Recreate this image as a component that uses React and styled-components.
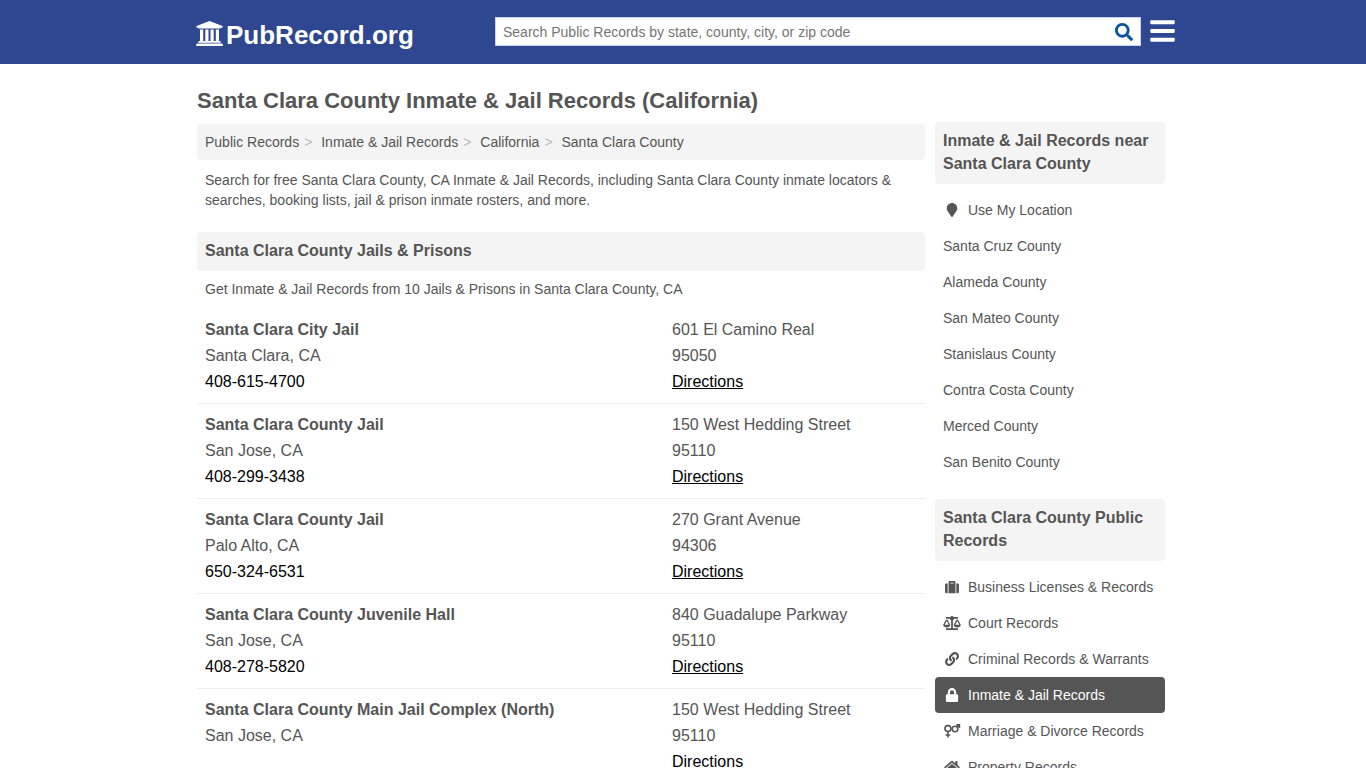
import React from 'react';
import styled, { createGlobalStyle } from 'styled-components';
import {
  FaBalanceScale,
  FaBars,
  FaHome,
  FaLink,
  FaLock,
  FaMapMarker,
  FaSearch,
  FaSuitcase,
} from 'react-icons/fa';

const GlobalStyle = createGlobalStyle`
  * {
    box-sizing: border-box;
  }
  body {
    margin: 0;
    background: #fff;
    color: #555;
    font-family: Arial, "Liberation Sans", sans-serif;
    font-size: 14px;
    line-height: 20px;
  }
  a {
    color: inherit;
    text-decoration: none;
  }
`;

const Header = styled.header`
  background: #2e4790;
`;

const HeaderInner = styled.div`
  display: flex;
  align-items: center;
  max-width: 984px;
  height: 64px;
  margin: 0 auto;
  padding: 0 0 1px 5px;
`;

const Logo = styled.a`
  display: flex;
  flex: 0 0 299px;
  align-items: center;
  gap: 3px;
  color: #fff;
  font-size: 26px;
  font-weight: bold;
  line-height: 30px;
  padding-top: 7px;
  svg {
    width: 27px;
    height: 28px;
    fill: currentColor;
  }
`;

const SearchForm = styled.form`
  display: flex;
  flex: 1;
  height: 29px;
  background: #fff;
  border: 1px solid #c5d5ee;
`;

const SearchInput = styled.input`
  flex: 1;
  min-width: 0;
  padding: 0 7px;
  border: 0;
  outline: 0;
  background: transparent;
  font: inherit;
  &::placeholder {
    color: #757575;
  }
`;

const SearchButton = styled.button`
  display: flex;
  align-items: center;
  padding: 0 7px;
  border: 0;
  background: transparent;
  color: #0b559f;
  font-size: 18px;
`;

const MenuButton = styled.button`
  display: flex;
  justify-content: flex-end;
  width: 34px;
  padding: 0 0 2px;
  border: 0;
  background: transparent;
  color: #fff;
  svg {
    width: 25px;
    height: 28px;
  }
`;

const Page = styled.div`
  display: flex;
  gap: 10px;
  max-width: 984px;
  margin: 0 auto;
  padding: 22px 10px 20px 6px;
`;

const Main = styled.main`
  flex: 1;
  min-width: 0;
`;

const Title = styled.h1`
  margin: 0 0 8px;
  font-size: 22px;
  line-height: 30px;
`;

const Breadcrumb = styled.ol`
  display: flex;
  flex-wrap: wrap;
  margin: 0 0 2px;
  padding: 8px;
  list-style: none;
  background: #f4f4f4;
  border-radius: 4px;
  li + li::before {
    padding: 0 5px;
    color: #bbb;
    content: '>\\00a0';
  }
`;

const Text = styled.p`
  margin: 0;
  padding: 8px;
`;

const SectionTitle = styled.h2`
  margin: 14px 0 0;
  padding: 7px 8px 9px;
  background: #f4f4f4;
  border-radius: 4px;
  font-size: 16px;
  line-height: 23px;
`;

const Jails = styled.ul`
  margin: 0;
  padding: 2px 0 0;
  list-style: none;
`;

const Jail = styled.li`
  display: grid;
  grid-template-columns: 1fr 245px;
  padding: 8px;
  border-bottom: 1px solid #eee;
  font-size: 16px;
  line-height: 26px;
`;

const JailColumn = styled.div`
  display: flex;
  flex-direction: column;
  align-items: flex-start;
`;

const Phone = styled.a`
  color: #000;
`;

const Directions = styled.a`
  color: #000;
  text-decoration: underline;
`;

const Sidebar = styled.aside`
  flex: 0 0 230px;
  padding-top: 36px;
`;

const SideTitle = styled.h2`
  margin: 0 0 8px;
  padding: 7px 8px 9px;
  background: #f4f4f4;
  border-radius: 4px;
  font-size: 16px;
  line-height: 23px;
`;

const SideList = styled.ul`
  margin: 0 0 19px;
  padding: 0;
  list-style: none;
`;

const SideLink = styled.a`
  display: flex;
  align-items: center;
  gap: 7px;
  padding: 8px;
  border-radius: 4px;
  background: ${(props) => (props.$active ? '#555' : 'transparent')};
  color: ${(props) => (props.$active ? '#fff' : '#555')};
  svg {
    width: 18px;
    height: 14px;
  }
`;

const crumbs = ['Public Records', 'Inmate & Jail Records', 'California', 'Santa Clara County'];

const jails = [
  {
    name: 'Santa Clara City Jail',
    city: 'Santa Clara, CA',
    phone: '408-615-4700',
    street: '601 El Camino Real',
    zip: '95050',
  },
  {
    name: 'Santa Clara County Jail',
    city: 'San Jose, CA',
    phone: '408-299-3438',
    street: '150 West Hedding Street',
    zip: '95110',
  },
  {
    name: 'Santa Clara County Jail',
    city: 'Palo Alto, CA',
    phone: '650-324-6531',
    street: '270 Grant Avenue',
    zip: '94306',
  },
  {
    name: 'Santa Clara County Juvenile Hall',
    city: 'San Jose, CA',
    phone: '408-278-5820',
    street: '840 Guadalupe Parkway',
    zip: '95110',
  },
  {
    name: 'Santa Clara County Main Jail Complex (North)',
    city: 'San Jose, CA',
    street: '150 West Hedding Street',
    zip: '95110',
  },
];

const nearby = [
  { label: 'Use My Location', icon: FaMapMarker },
  { label: 'Santa Cruz County' },
  { label: 'Alameda County' },
  { label: 'San Mateo County' },
  { label: 'Stanislaus County' },
  { label: 'Contra Costa County' },
  { label: 'Merced County' },
  { label: 'San Benito County' },
];

const records = [
  { label: 'Business Licenses & Records', icon: FaSuitcase },
  { label: 'Court Records', icon: FaBalanceScale },
  { label: 'Criminal Records & Warrants', icon: FaLink },
  { label: 'Inmate & Jail Records', icon: FaLock, active: true },
  { label: 'Marriage & Divorce Records', icon: MarriageIcon },
  { label: 'Property Records', icon: FaHome },
];

function CourthouseIcon() {
  return (
    <svg viewBox="0 0 27 28" aria-hidden="true">
      <path d="M13.5 0 26.5 5v1.7h-1.8q0 .9-1 .9H3.3q-1 0-1-.9H.5V5z" />
      <path d="M4 8.5h3.2V20h2.1V8.5h3.2V20h2V8.5h3.2V20h2.1V8.5H23V20h.7q1 0 1 1v.8H2.3V21q0-1 1-1H4z" />
      <path d="M1.2 22.6h24.6q1 0 1 1V25H.2v-1.4q0-1 1-1z" />
    </svg>
  );
}

function MarriageIcon() {
  return (
    <svg
      viewBox="0 0 18 14"
      fill="none"
      stroke="currentColor"
      strokeWidth="1.6"
      aria-hidden="true"
    >
      <circle cx="4.9" cy="4.6" r="3" />
      <path d="M4.9 7.6v6M2.5 11h4.8" />
      <circle cx="12" cy="5" r="2.8" />
      <path d="M14 3l2.5-2.3M13.4.9h3v3" />
    </svg>
  );
}

function SideNav({ title, items }) {
  return (
    <nav>
      <SideTitle>{title}</SideTitle>
      <SideList>
        {items.map(({ label, icon: Icon, active }) => (
          <li key={label}>
            <SideLink href="#" $active={active}>
              {Icon && <Icon />}
              {label}
            </SideLink>
          </li>
        ))}
      </SideList>
    </nav>
  );
}

function App() {
  return (
    <>
      <GlobalStyle />
      <Header>
        <HeaderInner>
          <Logo href="#">
            <CourthouseIcon />
            PubRecord.org
          </Logo>
          <SearchForm>
            <SearchInput
              type="text"
              aria-label="Search Public Records"
              placeholder="Search Public Records by state, county, city, or zip code"
            />
            <SearchButton type="submit" aria-label="Search">
              <FaSearch />
            </SearchButton>
          </SearchForm>
          <MenuButton type="button" aria-label="Menu">
            <FaBars />
          </MenuButton>
        </HeaderInner>
      </Header>
      <Page>
        <Main>
          <Title>Santa Clara County Inmate & Jail Records (California)</Title>
          <Breadcrumb>
            {crumbs.map((crumb) => (
              <li key={crumb}>
                <a href="#">{crumb}</a>
              </li>
            ))}
          </Breadcrumb>
          <Text>
            Search for free Santa Clara County, CA Inmate & Jail Records, including Santa Clara
            County inmate locators & searches, booking lists, jail & prison inmate rosters, and
            more.
          </Text>
          <SectionTitle>Santa Clara County Jails & Prisons</SectionTitle>
          <Text>Get Inmate & Jail Records from 10 Jails & Prisons in Santa Clara County, CA</Text>
          <Jails>
            {jails.map((jail, i) => (
              <Jail key={i}>
                <JailColumn>
                  <strong>{jail.name}</strong>
                  <span>{jail.city}</span>
                  {jail.phone && <Phone href={`tel:${jail.phone}`}>{jail.phone}</Phone>}
                </JailColumn>
                <JailColumn>
                  <span>{jail.street}</span>
                  <span>{jail.zip}</span>
                  <Directions href="#">Directions</Directions>
                </JailColumn>
              </Jail>
            ))}
          </Jails>
        </Main>
        <Sidebar>
          <SideNav title="Inmate & Jail Records near Santa Clara County" items={nearby} />
          <SideNav title="Santa Clara County Public Records" items={records} />
        </Sidebar>
      </Page>
    </>
  );
}

export default App;
